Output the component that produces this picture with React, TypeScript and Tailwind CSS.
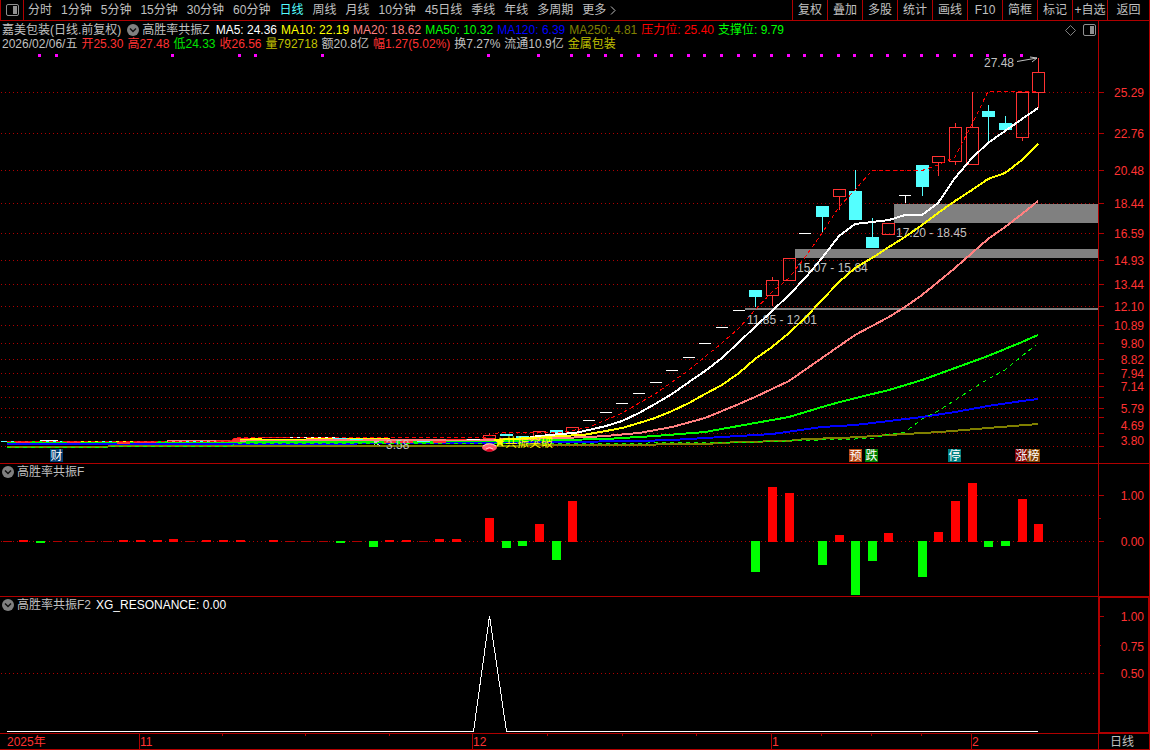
import { useState } from 'react';

const periods = [
  '分时', '1分钟', '5分钟', '15分钟', '30分钟', '60分钟', '日线', '周线',
  '月线', '10分钟', '45日线', '季线', '年线', '多周期', '更多',
];

const tools = ['复权', '叠加', '多股', '统计', '画线', 'F10', '简框', '标记', '+自选'];

const indicators = [
  { text: 'MA5: 24.36', color: 'text-white' },
  { text: 'MA10: 22.19', color: 'text-[#ffff00]' },
  { text: 'MA20: 18.62', color: 'text-[#ff8080]' },
  { text: 'MA50: 10.32', color: 'text-[#00ff00]' },
  { text: 'MA120: 6.39', color: 'text-[#0000ff]' },
  { text: 'MA250: 4.81', color: 'text-[#808000]' },
  { text: '压力位: 25.40', color: 'text-[#ff0000]' },
  { text: '支撑位: 9.79', color: 'text-[#00ff00]' },
];

const quotes = [
  { text: '2026/02/06/五', color: 'text-[#c0c0c0]' },
  { text: '开25.30', color: 'text-[#ff3232]' },
  { text: '高27.48', color: 'text-[#ff3232]' },
  { text: '低24.33', color: 'text-[#00e600]' },
  { text: '收26.56', color: 'text-[#ff3232]' },
  { text: '量792718', color: 'text-[#c0c000]' },
  { text: '额20.8亿', color: 'text-[#c0c0c0]' },
  { text: '幅1.27(5.02%)', color: 'text-[#ff3232]' },
  { text: '换7.27%', color: 'text-[#c0c0c0]' },
  { text: '流通10.9亿', color: 'text-[#c0c0c0]' },
  { text: '金属包装', color: 'text-[#c0c000]' },
];

// pixel column of the n-th trading day
const dayX = (i: number) => Math.floor(7.3 + 16.635 * i);

const gridRows = [92, 133, 170, 203, 233, 260, 284, 306, 325, 343, 359, 373, 386, 397, 408, 417, 433, 446];

const priceLabels: [string, number][] = [
  ['25.29', 92], ['22.76', 133], ['20.48', 170], ['18.44', 203], ['16.59', 233],
  ['14.93', 260], ['13.44', 284], ['12.10', 306], ['10.89', 325], ['9.80', 343],
  ['8.82', 359], ['7.94', 373], ['7.14', 386], ['5.79', 408], ['4.69', 425], ['3.80', 440],
];

const signalDays = [2, 3, 10, 14, 15, 19, 29, 32, ...Array.from({ length: 28 }, (_, i) => 34 + i)];

// limit-up days with a single price: [day, y]
const flatDays = [
  [35, 420], [36, 412], [37, 403], [38, 393], [39, 382], [40, 370],
  [41, 357], [42, 343], [43, 327], [44, 310], [48, 233], [54, 195],
];

// [day, body top, body bottom, high, low]
const upDays = [
  [29, 435, 439, 433, 439], [32, 431, 437, 431, 437], [34, 427, 434, 427, 434],
  [46, 280, 296, 277, 306], [47, 258, 281, 258, 281], [50, 189, 197, 189, 210],
  [53, 223, 235, 223, 235], [56, 156, 163, 156, 176], [57, 127, 162, 123, 165],
  [58, 127, 165, 92, 165], [61, 92, 138, 92, 141], [62, 72, 93, 58, 108],
];

const downDays = [
  [22, 440, 443, 440, 443], [30, 434, 436, 434, 436], [31, 436, 438, 436, 438],
  [33, 430, 433, 430, 433], [45, 290, 297, 290, 307], [49, 206, 217, 206, 233],
  [51, 191, 220, 170, 220], [52, 237, 248, 218, 248], [55, 165, 187, 165, 196],
  [59, 111, 117, 105, 141], [60, 123, 130, 116, 130],
];

const averages = [
  {
    color: '#808000',
    points: '7,447 107,447 109,446 480,446 560,445 655,445 657,444 705,444 739,442 788,441 806,439 840,438 860,437 905,434 940,432 988,428 1038,424',
  },
  {
    color: '#0000ff',
    points: '7,444 235,444 480,443 560,442 639,441 672,440 722,437 772,434 822,427 855,425 889,421 922,417 955,412 988,406 1022,401 1038,399',
  },
  {
    color: '#00ff00',
    points: '7,442 180,442 390,442 480,441 560,440 606,439 655,436 705,432 755,423 789,417 822,407 840,402 860,397 889,390 922,380 955,368 988,356 1022,342 1038,335',
  },
  {
    color: '#ff8080',
    points: '167,441 230,441 262,440 480,440 560,438 589,437 606,436 639,433 672,427 705,418 739,404 755,397 789,381 822,358 855,335 872,326 889,317 905,307 922,295 938,282 955,268 972,253 988,239 1005,227 1022,214 1038,201',
  },
  {
    color: '#ffff00',
    points: '494,440 530,438 560,436 583,435 606,431 622,428 639,423 655,418 672,411 689,403 705,394 722,385 739,373 755,359 772,347 789,333 806,317 822,300 839,282 855,268 872,258 889,247 905,237 922,225 938,213 955,201 972,190 988,179 1005,173 1022,160 1038,144',
  },
  {
    color: '#ffffff',
    points: '530,437 560,434 575,433 593,429 606,426 622,421 639,413 655,404 672,394 689,382 705,371 722,358 739,342 755,327 772,311 789,295 806,277 822,258 839,236 855,224 872,222 889,220 905,215 922,215 938,203 955,178 972,158 988,143 1005,131 1022,119 1038,108',
  },
];

// early quiet stretch, where candles and averages overlap: [x, y, width, height, colour]
const quietStrips: [number, number, number, number, string][] = [
  [1, 441, 22, 1, '#54ffff'], [16, 441, 14, 2, '#ff3232'], [30, 441, 12, 1, '#00ff00'],
  [40, 440, 18, 1, '#ffffff'], [42, 441, 20, 1, '#54ffff'], [67, 441, 13, 2, '#ff3232'],
  [80, 441, 54, 1, '#ffff00'], [100, 441, 14, 1, '#54ffff'], [134, 441, 22, 2, '#ff3232'],
  [117, 442, 13, 2, '#ff3232'], [183, 441, 25, 1, '#54ffff'], [216, 440, 24, 2, '#ff3232'],
  [233, 438, 24, 2, '#ff3232'], [250, 438, 12, 1, '#ffff00'], [262, 437, 24, 1, '#ff3232'],
  [288, 437, 50, 1, '#ffffff'], [240, 439, 66, 1, '#ffff00'], [306, 438, 84, 1, '#ffff00'],
  [333, 438, 14, 1, '#54ffff'], [350, 439, 13, 1, '#54ffff'], [384, 441, 12, 2, '#ff3232'],
  [400, 441, 13, 2, '#ff3232'], [417, 441, 13, 1, '#54ffff'], [433, 441, 13, 2, '#ff3232'],
  [446, 439, 20, 1, '#ff3232'], [467, 439, 13, 1, '#ffffff'],
];

const gaps = [
  { x: 745, top: 308, bottom: 310, label: '11.85 - 12.01', textY: 324 },
  { x: 795, top: 249, bottom: 258, label: '15.07 - 15.84', textY: 272 },
  { x: 894, top: 204, bottom: 223, label: '17.20 - 18.45', textY: 237 },
];

const badges = [
  { x: 50, text: '财', color: '#003c70' },
  { x: 849, text: '预', color: '#b84810' },
  { x: 865, text: '跌', color: '#008000' },
  { x: 948, text: '停', color: '#008080' },
  { x: 1015, text: '涨', color: '#800000' },
  { x: 1027, text: '榜', color: '#804000' },
];

// [day, y of the far end of the bar]
const bars = [
  [0, 541], [1, 540], [2, 543], [3, 541], [4, 541], [5, 541], [6, 541], [7, 540], [8, 540],
  [9, 540], [10, 539], [11, 541], [12, 540], [13, 540], [14, 540], [16, 540], [17, 541],
  [18, 541], [19, 541], [20, 543], [21, 541], [22, 547], [23, 540], [24, 540], [25, 541],
  [26, 539], [27, 539], [29, 518], [30, 548], [31, 546], [32, 524], [33, 560], [34, 501],
  [45, 572], [46, 487], [47, 493], [49, 565], [50, 535], [51, 595], [52, 561], [53, 533],
  [55, 577], [56, 532], [57, 501], [58, 483], [59, 547], [60, 546], [61, 499], [62, 524],
];

const months = [
  { x: 139, text: '11' },
  { x: 472, text: '12' },
  { x: 771, text: '1' },
  { x: 971, text: '2' },
];

const PanelIcon = () => (
  <svg width="13" height="12" viewBox="0 0 13 12" fill="none">
    <rect x="0.5" y="0.5" width="12" height="11" rx="1.5" stroke="#909090" />
    <rect x="7" y="2" width="4" height="8" fill="#909090" />
  </svg>
);

const ToggleButton = ({ label }: { label: string }) => (
  <button aria-label={label} className="shrink-0">
    <svg width="12" height="12" viewBox="0 0 12 12">
      <circle cx="6" cy="6" r="6" fill="#808080" />
      <path d="M3 4.5 6 7.5 9 4.5" fill="none" stroke="#101010" strokeWidth="1.5" />
    </svg>
  </button>
);

const GridLine = ({ y }: { y: number }) => (
  <line x1="1" x2="1094" y1={y + 0.5} y2={y + 0.5} stroke="#b00000" strokeDasharray="1 3" />
);

const AxisLabel = ({ y, text }: { y: number; text: string }) => (
  <text x="1144" y={y + 5} textAnchor="end" fill="#ff3232">{text}</text>
);

const Tick = ({ y, size = 5 }: { y: number; size?: number }) => (
  <rect x="1099" y={y} width={size} height="1" fill="#b00000" />
);

const PriceChart = () => (
  <svg viewBox="0 51 1098 412" className="block w-full h-auto" shapeRendering="crispEdges">
    {gridRows.map((y) => <GridLine key={y} y={y} />)}
    {gaps.map((gap) => (
      <rect key={gap.x} x={gap.x} y={gap.top} width={1098 - gap.x} height={gap.bottom - gap.top} fill="#808080" />
    ))}
    {signalDays.map((day) => (
      <rect key={day} x={dayX(day) - 2} y="54" width="3" height="3" fill="#ff00ff" />
    ))}

    {flatDays.map(([day, y]) => (
      <rect key={day} x={dayX(day) - 6} y={y} width="12" height="1" fill="#ffffff" />
    ))}
    <rect x={dayX(54)} y="195" width="1" height="8" fill="#ffffff" />
    {upDays.map(([day, top, bottom, high, low]) => (
      <g key={day} fill="#ff3232">
        <rect x={dayX(day)} y={high} width="1" height={top - high} />
        <rect x={dayX(day)} y={bottom} width="1" height={low - bottom} />
        <rect x={dayX(day) - 5.5} y={top + 0.5} width="12" height={bottom - top - 1} fill="none" stroke="#ff3232" />
      </g>
    ))}
    {downDays.map(([day, top, bottom, high, low]) => (
      <g key={day} fill="#54ffff">
        <rect x={dayX(day)} y={high} width="1" height={low - high} />
        <rect x={dayX(day) - 6} y={top} width="13" height={bottom - top} />
      </g>
    ))}

    {gaps.map((gap) => (
      <text key={gap.x} x={gap.x + 2} y={gap.textY} fill="#c0c0c0">{gap.label}</text>
    ))}

    {averages.map((line) => (
      <polyline key={line.color} points={line.points} fill="none" stroke={line.color} strokeWidth="2" />
    ))}
    {quietStrips.map(([x, y, width, height, color]) => (
      <rect key={`${x}-${y}`} x={x} y={y} width={width} height={height} fill={color} />
    ))}
    <path d="M380 446 374 441M374 445V441H379" stroke="#c0c0c0" fill="none" />
    <text x="386" y="449" fill="#c0c0c0">3.58</text>

    <polyline
      points="7,441.5 230,441.5 235,437.5 484,437.5 500,432.5 560,432.5 573,430.5 589,427 606,420 622,413 655,394 689,370 722,343 739,328 755,310 772,292 789,278 806,256 822,233 839,207 855,190 872,170.5 922,170.5 938,165 955,157 972,124 988,91.5 1038,91.5"
      fill="none" stroke="#ff0000" strokeDasharray="4 3"
    />
    <polyline
      points="7,447.5 107,447.5 109,446.5 230,446.5 236,443.5 560,443.5 740,442.5 800,440.5 873,438.5 889,434 905,432 922,419 938,411 988,379 1005,370 1022,356 1036,345"
      fill="none" stroke="#00ff00" strokeDasharray="4 4"
    />

    <g shapeRendering="auto">
      <ellipse cx="489.5" cy="447.5" rx="7.5" ry="4" fill="#ff6070" />
      <path d="M483 446q6.5-4.500 13 0M486 449q3.500-3 7 0" stroke="#ffd0d0" fill="none" />
      <path d="M486 450q3.500-2 7 0l-1 1.500h-5z" fill="#e00020" />
      <path d="M500 437l1.500 3.500H505l-2.500 2.500 1 4-3.500-2.500-3.500 2.500 1-4-2.500-2.500h3.500z" fill="#ffff00" />
      <path d="M1017 61.500 1037 58M1030 57l7 1-5 4" stroke="#c0c0c0" fill="none" />
    </g>
    <text x="505" y="447" fill="#ffff00">共振突破</text>
    <text x="984" y="67" fill="#c0c0c0">27.48</text>

    {badges.map((badge) => (
      <g key={badge.text}>
        <rect x={badge.x} y="449" width="13" height="13" fill={badge.color} />
        <text x={badge.x + 6.5} y="460" textAnchor="middle" fill="#ffffff">{badge.text}</text>
      </g>
    ))}
  </svg>
);

const HistogramChart = () => (
  <svg viewBox="0 480 1098 116" className="block w-full h-auto" shapeRendering="crispEdges">
    <GridLine y={495} />
    <GridLine y={541} />
    {bars.map(([day, y]) =>
      y > 542 ? (
        <rect key={day} x={dayX(day) - 4} y="541" width="9" height={y - 541} fill="#00ff00" />
      ) : (
        <rect key={day} x={dayX(day) - 4} y={y} width="9" height={542 - y} fill={y === 541 ? '#b00000' : '#ff0000'} />
      )
    )}
  </svg>
);

const ResonanceChart = () => (
  <svg viewBox="0 613 1098 120" className="block w-full h-auto" shapeRendering="crispEdges">
    <GridLine y={673} />
    <polyline points="7,731.5 473.5,731.5 489.5,616 506.5,731.5 1038,731.5" fill="none" stroke="#ffffff" />
  </svg>
);

export default function App() {
  const [period, setPeriod] = useState('日线');

  return (
    <div className="w-full bg-black text-[#c0c0c0] text-[12px] leading-[14px] font-['Liberation_Sans','Noto_Sans_CJK_SC',sans-serif] whitespace-nowrap border-r border-[#b00000] overflow-hidden">
      <nav className="flex h-[21px] items-stretch border-b border-l border-[#b00000]">
        <button aria-label="侧栏" className="flex w-[23px] items-center justify-center border-r border-[#b00000]">
          <PanelIcon />
        </button>
        <div className="flex flex-1 items-center gap-[9px] pl-1">
          {periods.map((item) => (
            <button
              key={item}
              onClick={() => setPeriod(item)}
              className={item === period ? 'text-[#54ffff]' : 'text-[#c0c0c0]'}
            >
              {item === '更多' ? (
                <span className="flex items-center gap-1">
                  {item}
                  <svg width="6" height="9" viewBox="0 0 6 9" fill="none" stroke="#c0c0c0">
                    <path d="M1 0.500 5 4.500 1 8.500" />
                  </svg>
                </span>
              ) : item}
            </button>
          ))}
        </div>
        {tools.map((item) => (
          <button key={item} className="w-[35px] border-l border-[#b00000] text-center">{item}</button>
        ))}
        <button className="w-[42px] border-l border-[#b00000] text-center">返回</button>
      </nav>

      <main>
        <section className="grid grid-cols-[1098fr_51fr] border-b border-[#b00000]">
          <div className="min-w-0">
            <header className="h-[30px] pt-[2px] pl-[2px]">
              <div className="flex h-[14px] items-center">
                <div className="flex flex-1 items-center gap-1">
                  <span>嘉美包装(日线.前复权)</span>
                  <span className="flex items-center gap-[3px] px-[2px]">
                    <ToggleButton label="主图指标" />
                    高胜率共振Z
                  </span>
                  {indicators.map((item) => (
                    <span key={item.text} className={item.color}>{item.text}</span>
                  ))}
                </div>
                <div className="flex items-center gap-[7px] pr-[2px]">
                  <button aria-label="标记点">
                    <svg width="11" height="11" viewBox="0 0 11 11" fill="none" stroke="#808080">
                      <path d="M5.500 0.500 10.500 5.500 5.500 10.500 0.500 5.500z" />
                    </svg>
                  </button>
                  <button aria-label="右侧栏"><PanelIcon /></button>
                </div>
              </div>
              <div className="flex h-[14px] items-center gap-1">
                {quotes.map((item) => (
                  <span key={item.text} className={item.color}>{item.text}</span>
                ))}
              </div>
            </header>
            <PriceChart />
          </div>
          <div className="border-l border-[#b00000]">
            <svg viewBox="1099 21 50 442" className="block w-full h-auto" shapeRendering="crispEdges">
              {gridRows.map((y) => <Tick key={y} y={y} />)}
              {priceLabels.map(([text, y]) => <AxisLabel key={text} y={y} text={text} />)}
            </svg>
          </div>
        </section>

        <section className="grid grid-cols-[1098fr_51fr] border-b border-[#b00000]">
          <div className="min-w-0">
            <header className="flex h-4 items-center gap-[3px] pl-[2px]">
              <ToggleButton label="副图指标一" />
              <span>高胜率共振F</span>
            </header>
            <HistogramChart />
          </div>
          <div className="border-l border-[#b00000]">
            <svg viewBox="1099 464 50 132" className="block w-full h-auto" shapeRendering="crispEdges">
              <Tick y={495} />
              <Tick y={518} size={2} />
              <Tick y={541} />
              <AxisLabel y={495} text="1.00" />
              <AxisLabel y={541} text="0.00" />
            </svg>
          </div>
        </section>

        <section className="grid grid-cols-[1098fr_51fr] border-b border-[#b00000]">
          <div className="min-w-0">
            <header className="flex h-4 items-center gap-[3px] pl-[2px]">
              <ToggleButton label="副图指标二" />
              <span>高胜率共振F2</span>
              <span className="pl-[2px] text-white">XG_RESONANCE: 0.00</span>
            </header>
            <ResonanceChart />
          </div>
          <div className="border-l border-[#b00000]">
            <svg viewBox="1099 597 50 136" className="block w-full h-auto" shapeRendering="crispEdges">
              <rect x="1099.5" y="597.5" width="49" height="135" fill="none" stroke="#b00000" />
              <Tick y={616} />
              <Tick y={645} size={2} />
              <Tick y={673} />
              <AxisLabel y={616} text="1.00" />
              <AxisLabel y={646} text="0.75" />
              <AxisLabel y={673} text="0.50" />
            </svg>
          </div>
        </section>
      </main>

      <footer className="grid grid-cols-[1098fr_51fr] border-b border-[#b00000]">
        <svg viewBox="0 734 1098 15" className="block w-full h-auto" shapeRendering="crispEdges" fill="#ff3232">
          <text x="7" y="746">2025年</text>
          {months.map((month) => (
            <g key={month.x}>
              <rect x={month.x} y="734" width="1" height="15" fill="#b00000" />
              <text x={month.x + 1} y="746">{month.text}</text>
            </g>
          ))}
          {[222, 305, 389, 547, 622, 696, 821, 871, 921].map((x) => (
            <rect key={x} x={x} y="734" width="1" height="2" fill="#b00000" />
          ))}
        </svg>
        <div className="flex items-center justify-center border-l border-[#b00000] pr-1">日线</div>
      </footer>
    </div>
  );
}
